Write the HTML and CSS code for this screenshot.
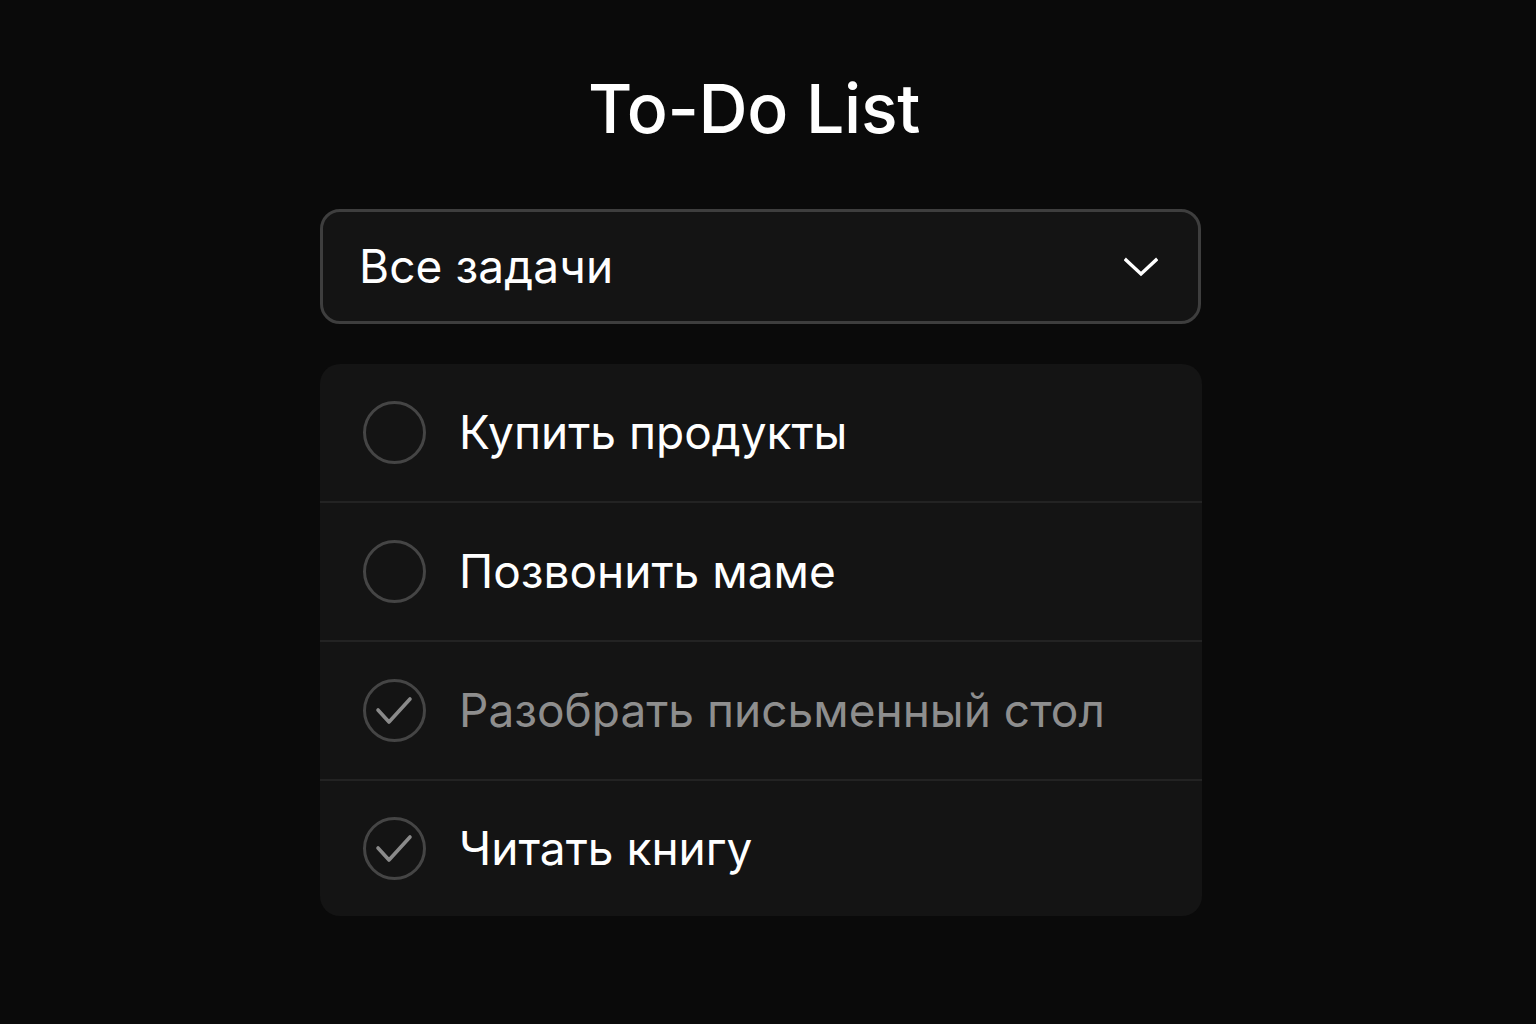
FILE: index.html
```html
<!DOCTYPE html>
<html lang="ru">
<head>
<meta charset="utf-8">
<title>To-Do List</title>
<link rel="stylesheet" href="styles.css">
</head>
<body>
<main class="app">
  <h1 class="title">To-Do List</h1>
  <div class="select">
    <span class="select-label">Все задачи</span>
    <svg class="chevron" width="34" height="20" viewBox="0 0 34 20"><path d="M2 3 L17 17 L32 3" fill="none" stroke="#fff" stroke-width="3.4" stroke-linecap="square"/></svg>
  </div>
  <ul class="list">
    <li class="item">
      <span class="check"></span>
      <span class="text">Купить продукты</span>
    </li>
    <li class="item">
      <span class="check"></span>
      <span class="text">Позвонить маме</span>
    </li>
    <li class="item done">
      <span class="check"><svg width="62" height="62" viewBox="0 0 62 62"><path d="M15 31 L26 43 L47 20" fill="none" stroke="#8a8a8a" stroke-width="3.6" stroke-linecap="round" stroke-linejoin="round"/></svg></span>
      <span class="text muted">Разобрать письменный стол</span>
    </li>
    <li class="item done">
      <span class="check"><svg width="62" height="62" viewBox="0 0 62 62"><path d="M15 31 L26 43 L47 20" fill="none" stroke="#8a8a8a" stroke-width="3.6" stroke-linecap="round" stroke-linejoin="round"/></svg></span>
      <span class="text">Читать книгу</span>
    </li>
  </ul>
</main>
</body>
</html>
```

FILE: styles.css
```css
html, body {
  margin: 0;
  padding: 0;
  background: #0a0a0a;
  color: #fff;
  font-family: Inter, "Noto Sans", "Liberation Sans", sans-serif;
}
.app {
  width: 882px;
  margin: 0 auto;
  padding-top: 64px;
  display: flex;
  flex-direction: column;
  transform: translateX(-7px);
}
.title {
  margin: 0;
  text-align: center;
  font-size: 68px;
  font-weight: 500;
  line-height: 88px;
  letter-spacing: -0.3px;
  transform: translateX(-7px);
}
.select {
  margin-top: 57px;
  height: 115px;
  box-sizing: border-box;
  border: 3px solid #3e3e3e;
  border-radius: 20px;
  background: #141414;
  display: flex;
  align-items: center;
  justify-content: space-between;
  padding: 0 40px 0 36px;
  width: 881px;
}
.select-label {
  font-size: 46px;
  font-weight: 400;
  letter-spacing: 0.1px;
  padding-bottom: 2px;
}
.chevron { display: block; }
.list {
  list-style: none;
  margin: 40px 0 0 0;
  padding: 0;
  background: #141414;
  border-radius: 20px;
  overflow: hidden;
}
.item {
  height: 137px;
  display: flex;
  align-items: center;
  padding-left: 43px;
  gap: 33px;
  border-top: 2px solid #232323;
}
.item:first-child { border-top: none; }
.item:last-child { height: 135px; }
.check {
  width: 63px;
  height: 63px;
  box-sizing: border-box;
  border: 3px solid #454545;
  border-radius: 50%;
  position: relative;
  flex: none;
}
.check svg { position: absolute; left: -3px; top: -3px; }
.text {
  font-size: 46px;
  font-weight: 400;
  letter-spacing: 0;
  padding-bottom: 2px;
}
.text.muted { color: #8e8e8e; }
```
